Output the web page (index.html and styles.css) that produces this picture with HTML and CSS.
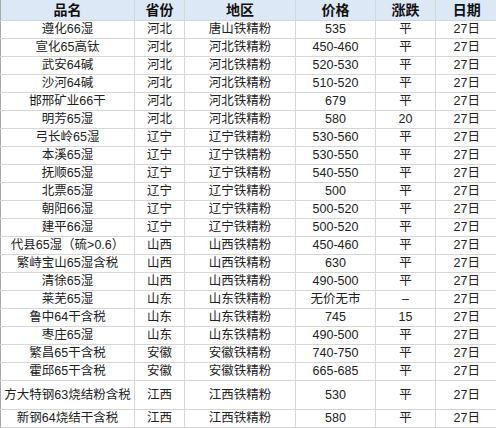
FILE: index.html
```html
<!DOCTYPE html>
<html lang="zh">
<head>
<meta charset="utf-8">
<title>铁精粉价格</title>
<link rel="stylesheet" href="styles.css">
</head>
<body>
<table class="price-table">
  <colgroup>
    <col class="c-name"><col class="c-prov"><col class="c-area"><col class="c-price"><col class="c-chg"><col class="c-date">
  </colgroup>
  <thead>
    <tr><th>品名</th><th>省份</th><th>地区</th><th>价格</th><th>涨跌</th><th>日期</th></tr>
  </thead>
  <tbody>
    <tr><td>遵化66湿</td><td>河北</td><td>唐山铁精粉</td><td>535</td><td>平</td><td>27日</td></tr>
    <tr><td>宣化65高钛</td><td>河北</td><td>河北铁精粉</td><td>450-460</td><td>平</td><td>27日</td></tr>
    <tr><td>武安64碱</td><td>河北</td><td>河北铁精粉</td><td>520-530</td><td>平</td><td>27日</td></tr>
    <tr><td>沙河64碱</td><td>河北</td><td>河北铁精粉</td><td>510-520</td><td>平</td><td>27日</td></tr>
    <tr><td>邯邢矿业66干</td><td>河北</td><td>河北铁精粉</td><td>679</td><td>平</td><td>27日</td></tr>
    <tr><td>明芳65湿</td><td>河北</td><td>河北铁精粉</td><td>580</td><td>20</td><td>27日</td></tr>
    <tr><td>弓长岭65湿</td><td>辽宁</td><td>辽宁铁精粉</td><td>530-560</td><td>平</td><td>27日</td></tr>
    <tr><td>本溪65湿</td><td>辽宁</td><td>辽宁铁精粉</td><td>530-550</td><td>平</td><td>27日</td></tr>
    <tr><td>抚顺65湿</td><td>辽宁</td><td>辽宁铁精粉</td><td>540-550</td><td>平</td><td>27日</td></tr>
    <tr><td>北票65湿</td><td>辽宁</td><td>辽宁铁精粉</td><td>500</td><td>平</td><td>27日</td></tr>
    <tr><td>朝阳66湿</td><td>辽宁</td><td>辽宁铁精粉</td><td>500-520</td><td>平</td><td>27日</td></tr>
    <tr><td>建平66湿</td><td>辽宁</td><td>辽宁铁精粉</td><td>500-520</td><td>平</td><td>27日</td></tr>
    <tr><td>代县65湿（硫&gt;0.6）</td><td>山西</td><td>山西铁精粉</td><td>450-460</td><td>平</td><td>27日</td></tr>
    <tr><td>繁峙宝山65湿含税</td><td>山西</td><td>山西铁精粉</td><td>630</td><td>平</td><td>27日</td></tr>
    <tr><td>清徐65湿</td><td>山西</td><td>山西铁精粉</td><td>490-500</td><td>平</td><td>27日</td></tr>
    <tr><td>莱芜65湿</td><td>山东</td><td>山东铁精粉</td><td>无价无市</td><td>–</td><td>27日</td></tr>
    <tr><td>鲁中64干含税</td><td>山东</td><td>山东铁精粉</td><td>745</td><td>15</td><td>27日</td></tr>
    <tr><td>枣庄65湿</td><td>山东</td><td>山东铁精粉</td><td>490-500</td><td>平</td><td>27日</td></tr>
    <tr><td>繁昌65干含税</td><td>安徽</td><td>安徽铁精粉</td><td>740-750</td><td>平</td><td>27日</td></tr>
    <tr><td>霍邱65干含税</td><td>安徽</td><td>安徽铁精粉</td><td>665-685</td><td>平</td><td>27日</td></tr>
    <tr class="tall"><td>方大特钢63烧结粉含税</td><td>江西</td><td>江西铁精粉</td><td>530</td><td>平</td><td>27日</td></tr>
    <tr><td>新钢64烧结干含税</td><td>江西</td><td>江西铁精粉</td><td>580</td><td>平</td><td>27日</td></tr>
  </tbody>
</table>
</body>
</html>
```

FILE: styles.css
```css
html, body {
  margin: 0;
  padding: 0;
  background: #ffffff;
}

.price-table {
  width: 497px;
  table-layout: fixed;
  border-collapse: collapse;
  border-spacing: 0;
  font-family: "Liberation Sans", "Noto Sans CJK SC", sans-serif;
  font-size: 12.5px;
  color: #222222;
}

.c-name { width: 134px; }
.c-prov { width: 50px; }
.c-area { width: 111px; }
.c-price { width: 80px; }
.c-chg { width: 60px; }
.c-date { width: 62px; }

.price-table th,
.price-table td {
  padding: 0;
  text-align: center;
  vertical-align: middle;
  white-space: nowrap;
  overflow: hidden;
  border-right: 1px solid #d6d6d6;
  border-bottom: 1px solid #d6d6d6;
  line-height: 16px;
}

.price-table th:first-child,
.price-table td:first-child {
  border-left: 1px solid #a8a8a8;
}

.price-table th:last-child,
.price-table td:last-child {
  border-right: none;
}

.price-table thead tr {
  height: 20px;
}

.price-table th {
  background: #dce8f6;
  font-size: 14px;
  font-weight: bold;
  color: #111111;
}

.price-table tbody tr {
  height: 18px;
}

.price-table tbody tr.tall {
  height: 29px;
}
```
